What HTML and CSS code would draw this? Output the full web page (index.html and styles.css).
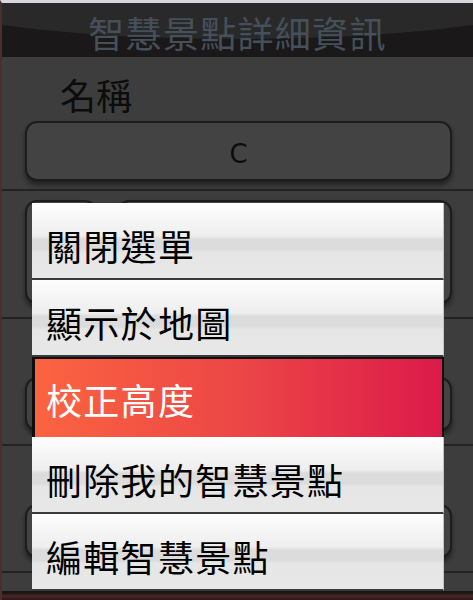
FILE: index.html
```html
<!DOCTYPE html>
<html lang="zh-Hant">
<head>
    <meta charset="UTF-8">
    <meta name="viewport" content="width=device-width, initial-scale=1.0">
    <title>智慧景點詳細資訊</title>
    <link rel="stylesheet" href="styles.css">
</head>
<body>
    <div id="screen">
        <div id="title-bar">
            <h1 id="title">智慧景點詳細資訊</h1>
        </div>

        <div id="detail">
            <div class="section">
                <p class="label">名稱</p>
                <div class="field field-name">C</div>
            </div>
            <div class="section section-pair">
                <div class="field field-small"></div>
                <div class="field field-wide"></div>
            </div>
            <div class="section section-low">
                <div class="field field-short"></div>
            </div>
            <div class="section section-low">
                <div class="field field-short"></div>
            </div>
        </div>

        <div id="bottom-edge"></div>
    </div>

    <div id="menu">
        <div class="menu-item">關閉選單</div>
        <div class="menu-item">顯示於地圖</div>
        <div class="menu-item selected">校正高度</div>
        <div class="menu-item">刪除我的智慧景點</div>
        <div class="menu-item">編輯智慧景點</div>
    </div>
</body>
</html>
```

FILE: styles.css
```css
body {
    margin: 0;
    width: 473px;
    height: 600px;
    overflow: hidden;
    background-color: #141212;
    font-family: "Noto Sans CJK TC", "Noto Sans", sans-serif;
}
#screen {
    display: flex;
    flex-direction: column;
    height: 597px;
    border-top: 3px solid #d9d7dd;
    border-left: 2px solid #4b2f2b;
}
#title-bar {
    position: relative;
    flex-shrink: 0;
    overflow: hidden;
    height: 54px;
    background-color: #1a1818;
    text-align: center;
}
#title-bar::before {
    content: "";
    position: absolute;
    left: -20%;
    top: -58px;
    width: 140%;
    height: 94px;
    border-radius: 50%;
    background-color: #2a2929;
}
#title {
    position: relative;
    margin: 0;
    padding-top: 7px;
    font-size: 36px;
    font-weight: 400;
    line-height: 44px;
    letter-spacing: 1.3px;
    color: #45505b;
}
#detail {
    flex: 1;
    background-color: #3d3d3d;
}
.section {
    border-bottom: 2px solid #232323;
    padding: 0 21px 0 23px;
}
.label {
    margin: 0;
    padding: 14px 0 4px 35px;
    font-size: 36px;
    line-height: 46px;
    color: #0c0c0c;
}
.field {
    box-sizing: border-box;
    border: 2px solid #1c1c1c;
    border-radius: 12px;
    background-color: #444344;
    box-shadow: 0 4px 5px rgba(0, 0, 0, 0.45);
}
.field-name {
    height: 60px;
    margin-bottom: 8px;
    padding-top: 6px;
    text-align: center;
    font-family: "DejaVu Sans", sans-serif;
    font-size: 26px;
    line-height: 50px;
    color: #0c0c0c;
}
.section-pair {
    display: flex;
    gap: 20px;
    height: 117px;
    padding-top: 9px;
}
.section-pair .field {
    height: 104px;
}
.field-small {
    width: 72px;
}
.field-wide {
    flex: 1;
}
.section-low {
    height: 67px;
    padding-top: 58px;
}
.field-short {
    height: 54px;
}
#bottom-edge {
    flex-shrink: 0;
    height: 7px;
    border-top: 2px solid #1a1616;
    background: linear-gradient(to bottom, #1a1414, #4a2626 40%, #2a1818);
}
#menu {
    position: absolute;
    left: 32px;
    top: 203px;
    width: 412px;
}
.menu-item {
    box-sizing: border-box;
    height: 77px;
    padding: 0 0 0 14px;
    border-bottom: 2px solid #3a3a3a;
    border-right: 1px solid #c4c4c4;
    background: linear-gradient(to bottom, #fefefe 0%, #f7f7f7 18%, #eeeeee 44%, #dcdcdc 48%, #dcdcdc 62%, #e6e6e6 66%, #e8e8e8 100%);
    font-size: 36px;
    line-height: 84px;
    letter-spacing: 1.3px;
    color: #000;
}
.menu-item.selected {
    height: 80px;
    border: 2px solid #0e0e0e;
    border-left-width: 3px;
    border-bottom: none;
    padding-left: 11px;
    background: linear-gradient(to right, #fb6440, #ec4646 50%, #dc1a4a);
    color: #fff;
    line-height: 80px;
}
```
